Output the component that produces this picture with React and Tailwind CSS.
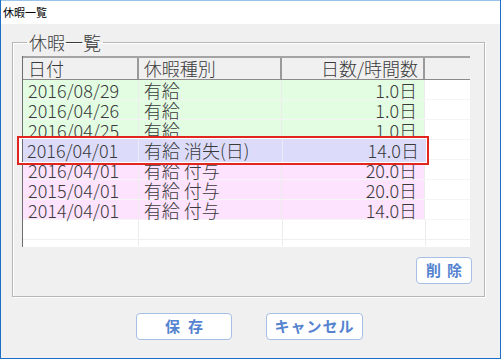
import React from 'react';

const rows = [
    { date: '2016/08/29', kind: '有給', days: '1.0日', tone: 'green' },
    { date: '2016/04/26', kind: '有給', days: '1.0日', tone: 'green' },
    { date: '2016/04/25', kind: '有給', days: '1.0日', tone: 'green' },
    { date: '2016/04/01', kind: '有給 消失(日)', days: '14.0日', tone: 'blue' },
    { date: '2016/04/01', kind: '有給 付与', days: '20.0日', tone: 'pink' },
    { date: '2015/04/01', kind: '有給 付与', days: '20.0日', tone: 'pink' },
    { date: '2014/04/01', kind: '有給 付与', days: '14.0日', tone: 'pink' },
];

const toneBg = {
    green: 'bg-[#e3fde3]',
    blue: 'bg-[#dcdcfa]',
    pink: 'bg-[#fde3fd]',
};

function Row({ row }) {
    return (
        <div className="flex h-5 leading-5 border-b border-[#f4f4f4]">
            <div className={`w-[116px] pl-[5px] border-r border-[#ececec] ${toneBg[row.tone]}`}>{row.date}</div>
            <div className={`w-[144px] pl-[5px] border-r border-[#ececec] ${toneBg[row.tone]}`}>{row.kind}</div>
            <div className={`w-[143px] pr-[7px] text-right border-r border-[#ececec] ${toneBg[row.tone]}`}>{row.days}</div>
            <div className="w-[45px] bg-white"></div>
        </div>
    );
}

export default function App() {
    const selected = rows[3];

    return (
        <div className="w-[501px] h-[359px] bg-[#f0f0f0] border-l border-r border-b border-[#1c6fc4] font-['Noto_Sans_CJK_JP',sans-serif] text-[#3a3a3a]">
            <div className="h-6 bg-white border-t border-[#9cc3ea] pl-[2px] text-[11px] leading-[22px] text-black">
                休暇一覧
            </div>

            <fieldset className="mt-2 ml-[11px] w-[473px] h-[265px] border border-[#b6b6b6] shadow-[inset_1px_1px_0_white,1px_1px_0_white] pl-[9px] pr-[12px]">
                <legend className="ml-[5px] px-[2px] text-[18px] leading-5 font-light">休暇一覧</legend>

                <div className="relative mt-1 w-[448px] h-[191px] bg-white border-l border-[#6d6d6d] text-[18px] font-light">
                    <div className="flex h-6 leading-[20px] bg-[#f0f0f0] border-t-2 border-[#a4a4a4] border-b border-b-[#8a8a8a]">
                        <div className="w-[116px] pl-[5px] border-r-2 border-[#9a9a9a]">日付</div>
                        <div className="w-[144px] pl-[5px] border-r-2 border-[#9a9a9a]">休暇種別</div>
                        <div className="w-[143px] pr-[5px] text-right border-r-2 border-[#9a9a9a]">日数/時間数</div>
                        <div className="w-[45px]"></div>
                    </div>

                    {rows.map((row, i) => (
                        <Row key={i} row={row} />
                    ))}

                    <div className="flex h-5 border-b border-[#f0f0f0]">
                        <div className="w-[116px] border-r border-[#ececec]"></div>
                        <div className="w-[144px] border-r border-[#ececec]"></div>
                        <div className="w-[143px] border-r border-[#ececec]"></div>
                    </div>
                    <div className="flex h-[6px]">
                        <div className="w-[116px] border-r border-[#ececec]"></div>
                        <div className="w-[144px] border-r border-[#ececec]"></div>
                        <div className="w-[143px] border-r border-[#ececec]"></div>
                    </div>

                    {/* 선택 행 확대 표시 */}
                    <div className="absolute left-[-6px] top-[80px] w-[412px] h-[29px] border-2 border-[#e0261f] bg-white pl-[3px] pr-[1px] pt-[1px]">
                        <div className="flex h-[23px] leading-[23px] bg-[#dcdcfa] border-l border-[#6d6d6d] text-[18px]">
                            <div className="w-[116px] pl-[4px] border-r border-[#ececf8]">{selected.date}</div>
                            <div className="w-[144px] pl-[5px] border-r border-[#ececf8]">{selected.kind}</div>
                            <div className="flex-1 pr-[7px] text-right">{selected.days}</div>
                        </div>
                    </div>
                </div>

                <div className="flex justify-end mt-[10px]">
                    <button className="w-[56px] h-[27px] rounded-[4px] border border-[#a6bfe6] bg-white text-[15px] font-bold text-[#5583cf] tracking-[6px] pl-[6px]">
                        削除
                    </button>
                </div>
            </fieldset>

            <div className="flex justify-center gap-[34px] mt-[16px] pr-[2px]">
                <button className="w-[96px] h-[27px] rounded-[4px] border border-[#a6bfe6] bg-white text-[15px] font-bold text-[#5583cf] tracking-[8px] pl-[8px]">
                    保存
                </button>
                <button className="w-[97px] h-[27px] rounded-[4px] border border-[#a6bfe6] bg-white text-[15px] font-bold text-[#5583cf] tracking-[1px]">
                    キャンセル
                </button>
            </div>
        </div>
    );
}
